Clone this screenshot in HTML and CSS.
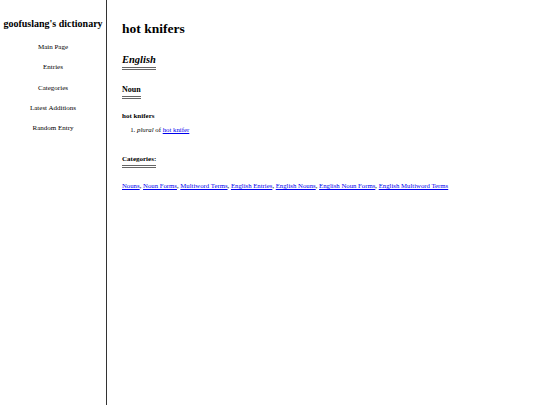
FILE: index.html
```html
<!DOCTYPE html>
<html>
<head>
<meta charset="utf-8">
<link rel="stylesheet" href="styles.css">
</head>
<body>
<div class="layout">
  <nav class="sidebar">
    <div class="site-title">goofuslang's dictionary</div>
    <a class="nav-link" href="#">Main Page</a>
    <a class="nav-link" href="#">Entries</a>
    <a class="nav-link" href="#">Categories</a>
    <a class="nav-link" href="#">Latest Additions</a>
    <a class="nav-link" href="#">Random Entry</a>
  </nav>
  <main class="content">
    <h1 class="page-title">hot knifers</h1>
    <h2 class="lang"><span class="ul">English</span></h2>
    <h3 class="pos"><span class="ul">Noun</span></h3>
    <div class="headword">hot knifers</div>
    <ol class="defs">
      <li><i>plural</i> of <a href="#">hot knifer</a></li>
    </ol>
    <h4 class="cats-head"><span class="ul">Categories:</span></h4>
    <div class="cats"><a href="#">Nouns</a>, <a href="#">Noun Forms</a>, <a href="#">Multiword Terms</a>, <a href="#">English Entries</a>, <a href="#">English Nouns</a>, <a href="#">English Noun Forms</a>, <a href="#">English Multiword Terms</a></div>
  </main>
</div>
</body>
</html>
```
FILE: styles.css
```css
html, body {
  margin: 0;
  padding: 0;
  background: #fff;
  font-family: "Liberation Serif", "Times New Roman", serif;
  color: #000;
}
.layout {
  display: flex;
  min-height: 405px;
}
.sidebar {
  width: 106px;
  border-right: 1.5px solid #333;
  display: flex;
  flex-direction: column;
  align-items: center;
  flex-shrink: 0;
}
.site-title {
  font-weight: bold;
  font-size: 10px;
  margin-top: 18px;
  margin-bottom: 14px;
  white-space: nowrap;
}
.nav-link {
  color: #000;
  text-decoration: none;
  font-size: 7px;
  line-height: 9px;
  margin-bottom: 11.3px;
}
.content {
  padding-left: 15px;
  flex: 1;
}
.ul {
  display: inline-block;
  border-bottom: 3px double #666;
  padding-bottom: 1px;
}
.page-title {
  font-size: 13.5px;
  margin: 21px 0 0;
  line-height: 16px;
}
.lang {
  font-size: 10.5px;
  font-style: italic;
  margin: 16px 0 0;
  line-height: 13px;
}
.pos {
  font-size: 8px;
  margin: 15px 0 0;
  line-height: 10px;
}
.headword {
  font-size: 7px;
  font-weight: bold;
  margin-top: 13px;
  line-height: 9px;
}
.defs {
  font-size: 6.8px;
  margin: 4px 0 0;
  padding-left: 15px;
  line-height: 9px;
}
.defs a, .cats a {
  color: #00e;
}
.cats-head {
  font-size: 7px;
  margin: 21px 0 0;
  line-height: 9px;
}
.cats {
  font-size: 6.75px;
  margin-top: 13px;
  line-height: 9px;
}
```
